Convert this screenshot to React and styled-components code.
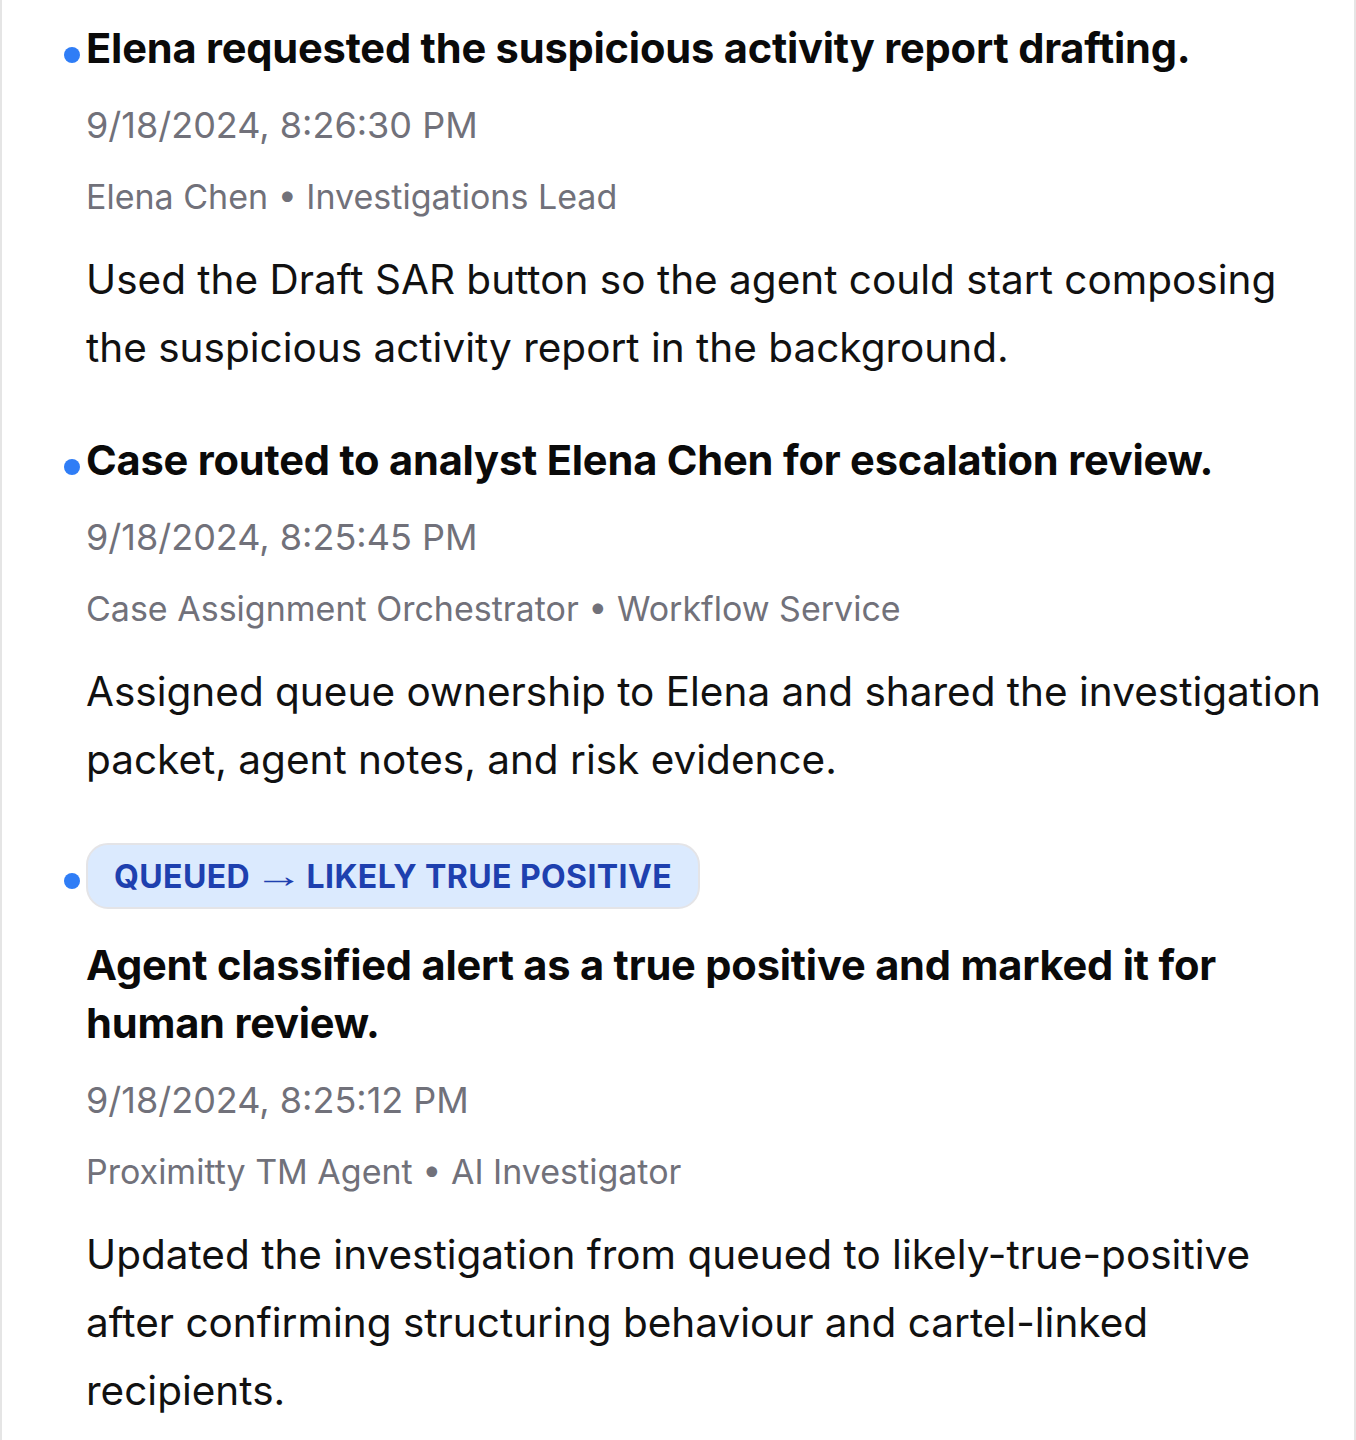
import React from 'react';
import styled, { createGlobalStyle } from 'styled-components';

const GlobalStyle = createGlobalStyle`
	* { box-sizing: border-box; }
	body {
		margin: 0;
		background: #ffffff;
		font-family: Inter, "Noto Sans", "Liberation Sans", sans-serif;
	}
`;

const Timeline = styled.ol`
	list-style: none;
	margin: 0;
	width: 1356px;
	min-height: 1440px;
	padding: 19px 14px 40px 62px;
	border-left: 2px solid #e5e5e5;
	border-right: 2px solid #e5e5e5;
	display: flex;
	flex-direction: column;
	gap: 49px;
`;

const Item = styled.li`
	display: grid;
	grid-template-columns: 16px 1fr;
	column-gap: 6px;
`;

const Dot = styled.span`
	width: 16px;
	height: 16px;
	margin-top: ${(props) => props.offset || 28}px;
	border-radius: 50%;
	background: #2f7df6;
`;

const Body = styled.div`
	display: flex;
	flex-direction: column;
	min-width: 0;
`;

const Badge = styled.span`
	align-self: flex-start;
	display: inline-flex;
	align-items: center;
	height: 66px;
	padding: 0 26px;
	margin-bottom: 27px;
	border: 2px solid #e4e4e7;
	border-radius: 22px;
	background: #dbeafe;
	color: #1e40af;
	font-size: 32px;
	font-weight: 700;
	letter-spacing: 0.4px;
	text-transform: uppercase;
	white-space: pre;
`;

const Arrow = styled.span`
	display: inline-block;
	font-family: "Liberation Sans", sans-serif;
	font-weight: 400;
	font-size: 33px;
	margin: 0 11px 0 12px;
	transform: scaleX(1.5);
`;

const Title = styled.h3`
	margin: 0;
	font-size: 41.6px;
	line-height: 58px;
	font-weight: 700;
	letter-spacing: -0.2px;
	color: #0a0a0a;
`;

const Stamp = styled.div`
	margin-top: 26px;
	font-size: 36px;
	line-height: 44px;
	color: #71717a;
`;

const Author = styled.div`
	margin-top: 28px;
	font-size: 34px;
	line-height: 44px;
	color: #71717a;
`;

const Note = styled.p`
	margin: 27px 0 0;
	font-size: 40.5px;
	line-height: 68px;
	color: #111111;
`;

const events = [
	{
		title: 'Elena requested the suspicious activity report drafting.',
		time: '9/18/2024, 8:26:30 PM',
		actor: 'Elena Chen',
		role: 'Investigations Lead',
		note: 'Used the Draft SAR button so the agent could start composing the suspicious activity report in the background.',
	},
	{
		title: 'Case routed to analyst Elena Chen for escalation review.',
		time: '9/18/2024, 8:25:45 PM',
		actor: 'Case Assignment Orchestrator',
		role: 'Workflow Service',
		note: 'Assigned queue ownership to Elena and shared the investigation packet, agent notes, and risk evidence.',
	},
	{
		status: ['Queued', 'Likely true positive'],
		title: 'Agent classified alert as a true positive and marked it for human review.',
		time: '9/18/2024, 8:25:12 PM',
		actor: 'Proximitty TM Agent',
		role: 'AI Investigator',
		note: 'Updated the investigation from queued to likely-true-positive after confirming structuring behaviour and cartel-linked recipients.',
	},
];

const App = () => {
	return (
		<>
			<GlobalStyle />
			<Timeline>
				{events.map((ev) => (
					<Item key={ev.time}>
						<Dot offset={ev.status ? 30 : 28} />
						<Body>
							{ev.status && (
								<Badge>
									{ev.status[0]}
									<Arrow>→</Arrow>
									{ev.status[1]}
								</Badge>
							)}
							<Title>{ev.title}</Title>
							<Stamp>{ev.time}</Stamp>
							<Author>
								{ev.actor} • {ev.role}
							</Author>
							<Note>{ev.note}</Note>
						</Body>
					</Item>
				))}
			</Timeline>
		</>
	);
};

export default App;
